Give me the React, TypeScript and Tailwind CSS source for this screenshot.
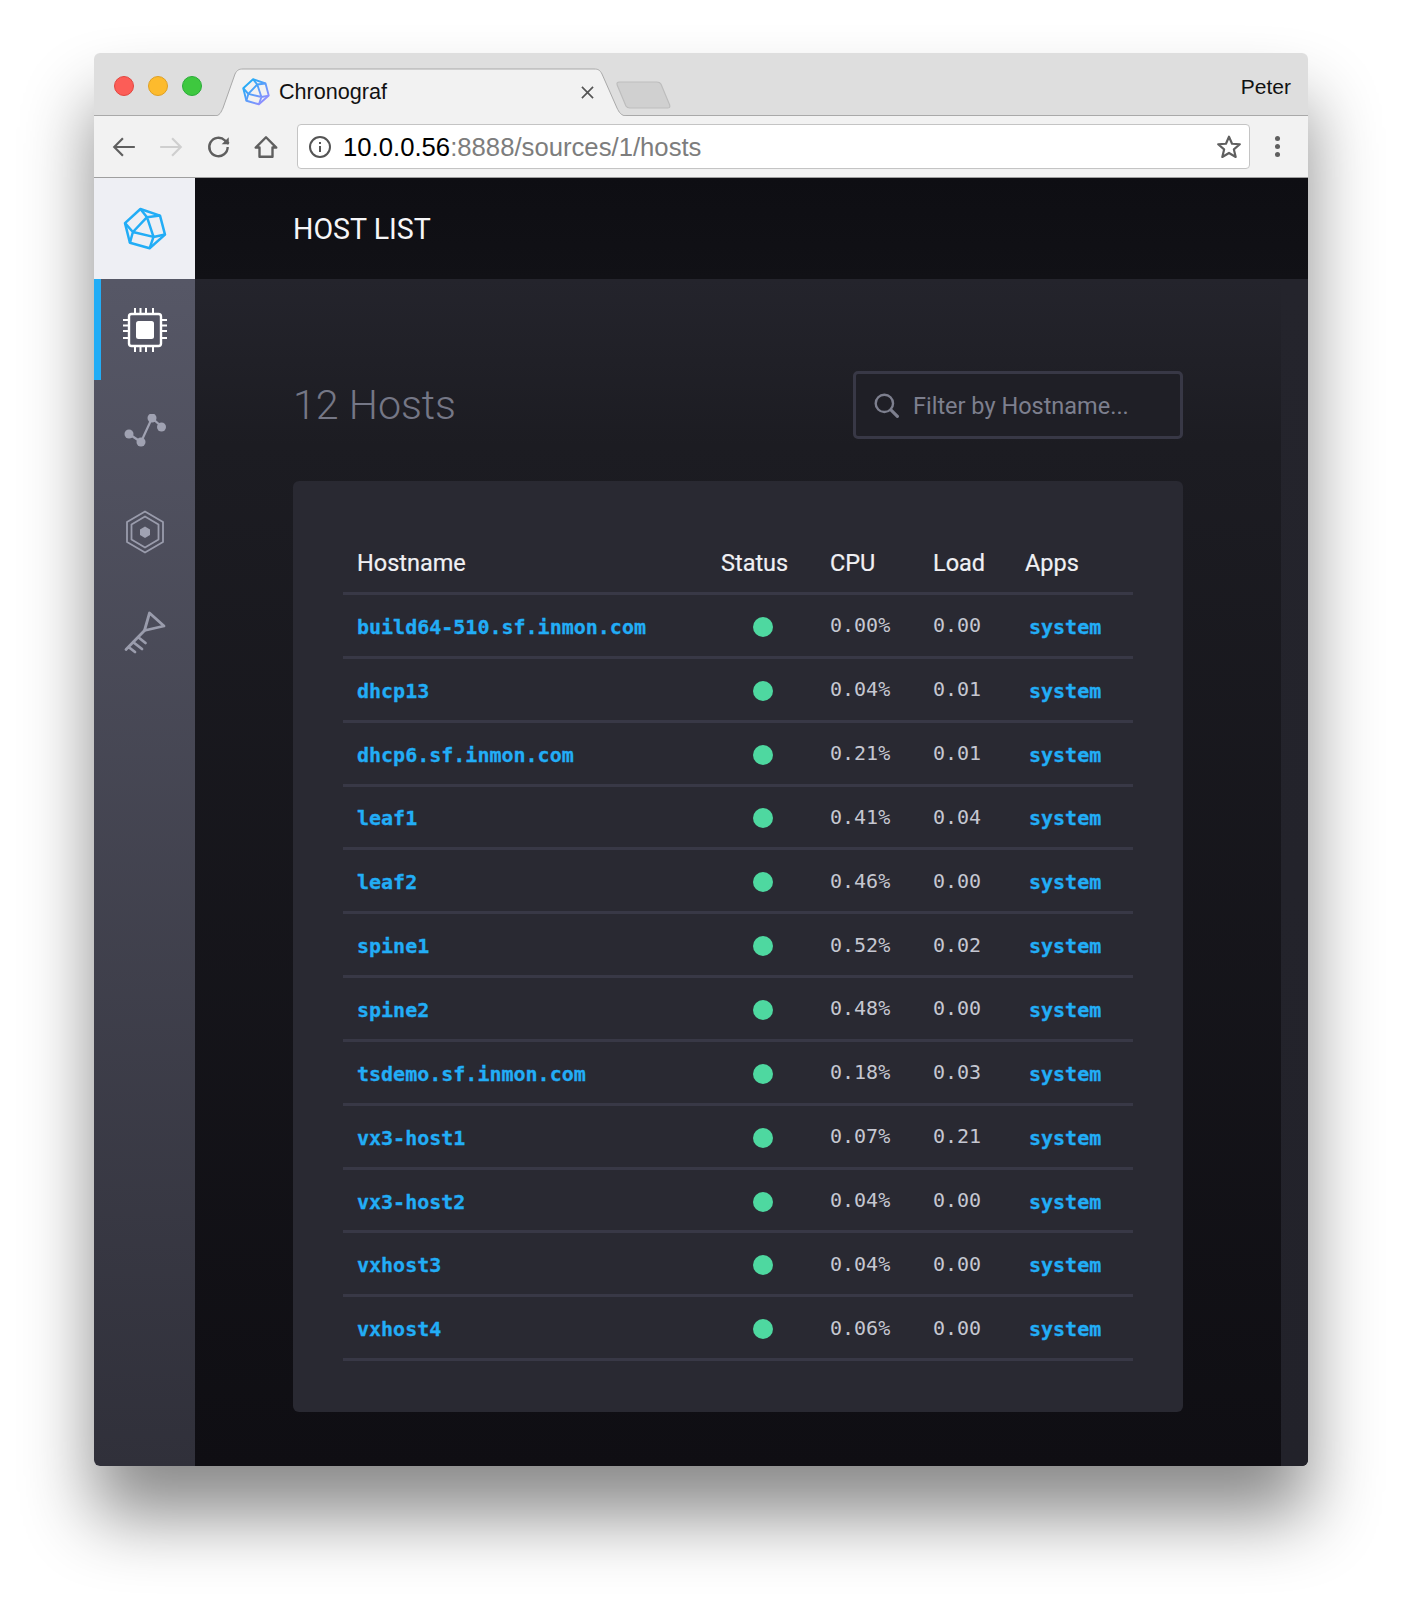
const hosts = [
  { name: 'build64-510.sf.inmon.com', cpu: '0.00%', load: '0.00' },
  { name: 'dhcp13', cpu: '0.04%', load: '0.01' },
  { name: 'dhcp6.sf.inmon.com', cpu: '0.21%', load: '0.01' },
  { name: 'leaf1', cpu: '0.41%', load: '0.04' },
  { name: 'leaf2', cpu: '0.46%', load: '0.00' },
  { name: 'spine1', cpu: '0.52%', load: '0.02' },
  { name: 'spine2', cpu: '0.48%', load: '0.00' },
  { name: 'tsdemo.sf.inmon.com', cpu: '0.18%', load: '0.03' },
  { name: 'vx3-host1', cpu: '0.07%', load: '0.21' },
  { name: 'vx3-host2', cpu: '0.04%', load: '0.00' },
  { name: 'vxhost3', cpu: '0.04%', load: '0.00' },
  { name: 'vxhost4', cpu: '0.06%', load: '0.00' },
];

const rowCols = 'grid grid-cols-[364px_109px_103px_92px_122px]';

function Logo({ className, gradient }: { className: string; gradient?: boolean }) {
  return (
    <svg viewBox="-2 -2 44 44" className={className} fill="none" stroke={gradient ? 'url(#tabLogo)' : '#22adf6'} strokeWidth={gradient ? 3 : 2.5} strokeLinejoin="round">
      {gradient && (
        <defs>
          <linearGradient id="tabLogo" gradientUnits="userSpaceOnUse" x1="5" y1="5" x2="35" y2="38">
            <stop offset="0" stopColor="#22adf6" />
            <stop offset="1" stopColor="#9a8cff" />
          </linearGradient>
        </defs>
      )}
      <path d="M15.400 0 35 6.600 40 25.600 24.600 39.300 4.900 33.800 0 14.100Z" />
      <path d="M15.400 0 22 8.200 35 6.600M22 8.200 7.900 23 0 14.100M7.900 23 4.900 33.800M7.900 23 28.500 27.900 40 25.600M28.500 27.900 24.600 39.300M22 8.200 28.500 27.900" />
    </svg>
  );
}

function CpuIcon() {
  return (
    <svg viewBox="0 0 44 44" className="h-[44px] w-[44px]" fill="none" stroke="#fff" strokeWidth="2">
      <rect x="6" y="6" width="32" height="32" rx="2.500" strokeWidth="2.400" />
      <rect x="13" y="13" width="18" height="18" rx="2.500" fill="#fff" stroke="none" />
      <path d="M12 0v5M17.500 0v5M23 0v5M30 0v5M12 39v5M17.500 39v5M23 39v5M30 39v5M0 12h5M0 17.500h5M0 23h5M0 30h5M39 12h5M39 17.500h5M39 23h5M39 30h5" />
    </svg>
  );
}

function GraphIcon() {
  return (
    <svg viewBox="0 0 42 38" className="mt-[4px] h-[38px] w-[42px]" fill="#a0a2b2" stroke="#a0a2b2" strokeWidth="2.200">
      <path d="M5 20 17 28 28 4 38 13" fill="none" />
      <circle cx="5" cy="20" r="4.500" stroke="none" />
      <circle cx="17" cy="28" r="4.500" stroke="none" />
      <circle cx="28" cy="4" r="4.500" stroke="none" />
      <circle cx="37.500" cy="13" r="4.500" stroke="none" />
    </svg>
  );
}

function HexIcon() {
  return (
    <svg viewBox="0 0 40 44" className="h-[44px] w-[40px]" fill="none" stroke="#9a9cac" strokeWidth="1.800" strokeLinejoin="round">
      <path d="M20 1.500 38 12v20L20 42.500 2 32V12Z" />
      <path d="M20 6.500 33.500 14.500v15L20 37.500 6.500 29.500v-15Z" />
      <path d="M20 16.500 25 19.500v5.500L20 28l-5-3v-5.500Z" fill="#a0a2b2" stroke="none" />
    </svg>
  );
}

function KeyIcon() {
  return (
    <svg viewBox="0 0 42 44" className="h-[44px] w-[42px]" fill="none" stroke="#9a9cac" strokeWidth="2.800" strokeLinecap="round" strokeLinejoin="round">
      <path d="M25.500 2 40 15 20.500 19.500Z" />
      <path d="M20.500 19.500 2 38.500M9 31 18 38M4.500 36 11 41M14 26 21.500 32" />
    </svg>
  );
}

export default function App() {
  return (
    <div className="h-[1600px] w-[1402px] overflow-hidden bg-white pl-[94px] pt-[53px]">
      <div className="h-[1413px] w-[1214px] overflow-hidden rounded-[6px] shadow-[0_50px_70px_rgba(0,0,0,0.46)]">
        {/* browser chrome */}
        <div className="relative flex h-[63px] items-center justify-end border-b border-[#a9a9a9] bg-[#dedede] pr-[17px] pt-[6px] font-['Liberation_Sans',sans-serif] text-[#111]">
          <span className="text-[21px]">Peter</span>
          <div className="absolute left-[20px] top-[23px] h-[20px] w-[20px] rounded-full border border-[#e2463f] bg-[#fc5d57]" />
          <div className="absolute left-[54px] top-[23px] h-[20px] w-[20px] rounded-full border border-[#dfa023] bg-[#fdbb2d]" />
          <div className="absolute left-[88px] top-[23px] h-[20px] w-[20px] rounded-full border border-[#2aac39] bg-[#3ec83f]" />
          <svg viewBox="0 0 420 48" className="absolute left-[120px] top-[15px] h-[48px] w-[420px]">
            <path d="M0 48 C6 48 7 44 9 40 L21 6 C23 2 25 1 29 1 H380 C384 1 386 2 388 6 L403 40 C405 44 407 48 413 48" fill="#f2f2f2" stroke="#a9a9a9" />
          </svg>
          <svg viewBox="0 0 48 28" preserveAspectRatio="none" className="absolute left-[522px] top-[28px] h-[28px] w-[56px]">
            <path d="M3 1 H35 C37 1 38 2 38.500 3 L46 24 C46.500 26 46 27 44 27 H12 C10 27 9 26 8.500 25 L1 4 C0.500 2 1 1 3 1Z" fill="#d0d0d0" stroke="#bdbdbd" />
          </svg>
          <div className="absolute left-[148px] top-[25px]"><Logo gradient className="h-[28px] w-[28px]" /></div>
          <span className="absolute left-[185px] top-[26px] text-[21.600px] leading-[26px] text-[#111]">Chronograf</span>
          <svg viewBox="0 0 14 14" className="absolute left-[487px] top-[33px] h-[13px] w-[13px]" stroke="#555" strokeWidth="1.800">
            <path d="M1 1 13 13M13 1 1 13" />
          </svg>
        </div>
        <div className="flex h-[62px] items-center border-b border-[#9f9f9f] bg-[#f2f2f2] font-['Liberation_Sans',sans-serif]">
          <svg viewBox="0 0 24 24" className="ml-[17px] h-[26px] w-[26px]" fill="none" stroke="#5f5f5f" strokeWidth="2"><path d="M22 12H3M11 4l-8 8 8 8" /></svg>
          <svg viewBox="0 0 24 24" className="ml-[21px] h-[26px] w-[26px]" fill="none" stroke="#cfcfcf" strokeWidth="2"><path d="M2 12h19M13 4l8 8-8 8" /></svg>
          <svg viewBox="0 0 24 24" className="ml-[22px] h-[26px] w-[26px]" fill="none" stroke="#5f5f5f" strokeWidth="2.200"><path d="M20 12a8.500 8.500 0 1 1-2.500-6L21 9" /><path d="M21 3v6.500h-6.500" fill="#5f5f5f" stroke="none" /></svg>
          <svg viewBox="0 0 24 24" className="ml-[21px] h-[26px] w-[26px]" fill="none" stroke="#5f5f5f" strokeWidth="2.200"><path d="M12 3 2.500 12.500H6V21h12v-8.500h3.500Z" strokeLinejoin="round" /></svg>
          <div className="ml-[18px] flex h-[45px] w-[953px] items-center rounded-[4px] border border-[#c4c4c4] bg-white">
            <svg viewBox="0 0 24 24" className="ml-[10px] h-[24px] w-[24px]" fill="none" stroke="#555" strokeWidth="2"><circle cx="12" cy="12" r="10" /><path d="M12 11v6M12 7v2" /></svg>
            <span className="ml-[11px] pt-[2px] text-[25.700px] text-black">10.0.0.56<span className="text-[#7d7d7d]">:8888/sources/1/hosts</span></span>
            <svg viewBox="0 0 24 24" className="ml-auto mr-[7px] h-[26px] w-[26px]" fill="none" stroke="#5f5f5f" strokeWidth="2" strokeLinejoin="round"><path d="M12 2.500 14.800 9 22 9.500 16.500 14.200 18.200 21.200 12 17.500 5.800 21.200 7.500 14.200 2 9.500 9.200 9Z" /></svg>
          </div>
          <div className="ml-[25px] flex flex-col gap-[3px]">
            <div className="h-[5px] w-[5px] rounded-full bg-[#5f5f5f]" />
            <div className="h-[5px] w-[5px] rounded-full bg-[#5f5f5f]" />
            <div className="h-[5px] w-[5px] rounded-full bg-[#5f5f5f]" />
          </div>
        </div>
        {/* app */}
        <div className="flex h-[1288px] font-['Roboto',sans-serif]">
          <div className="flex w-[101px] flex-col bg-gradient-to-b from-[#565766] from-[8%] to-[#30303a]">
            <div className="flex h-[101px] items-center justify-center bg-[#eeeff4]"><Logo className="h-[44px] w-[44px]" /></div>
            <div className="flex h-[101px] items-center justify-center border-l-[7px] border-[#22adf6] pr-[7px]">
              <CpuIcon />
            </div>
            <div className="flex h-[101px] items-center justify-center"><GraphIcon /></div>
            <div className="flex h-[101px] items-center justify-center"><HexIcon /></div>
            <div className="flex h-[101px] items-center justify-center"><KeyIcon /></div>
          </div>
          <div className="flex min-w-0 flex-1 flex-col">
            <div className="flex h-[101px] items-center bg-gradient-to-b from-[#0e0e13] to-[#111116] pl-[98px] pt-[2px] text-[28.600px] text-[#f6f6f8]">HOST LIST</div>
            <div className="flex min-h-0 flex-1 bg-gradient-to-b from-[#24242c] via-[#1c1c22] via-[14%] to-[#0f0e13]">
              <div className="w-[1086px] pl-[98px]">
                <div className="flex h-[202px] w-[890px] items-center justify-between pt-[50px]">
                  <h1 className="pt-[2px] text-[41.200px] font-light text-[#757786]">12 Hosts</h1>
                  <div className="flex h-[68px] w-[330px] items-center rounded-[5px] border-[3px] border-[#383846] bg-[#1f1f26]">
                    <svg viewBox="0 0 24 24" className="ml-[17px] h-[26px] w-[26px]" fill="none" stroke="#7d7f8e" strokeWidth="2.200"><circle cx="10.500" cy="10.500" r="8" /><path d="m16.500 16.500 6 6" strokeWidth="3" strokeLinecap="round" /></svg>
                    <span className="ml-[14px] pt-[3px] text-[23.500px] text-[#7d7f8e]">Filter by Hostname...</span>
                  </div>
                </div>
                <div className="h-[931px] w-[890px] rounded-[6px] bg-[#292932] pl-[50px] pt-[50px]">
                  <div className="w-[790px]">
                    <div className={`${rowCols} h-[64px] items-center border-b-[3px] border-[#383846] pt-[5px] text-[23.500px] text-[#f0f0f4] [-webkit-text-stroke:0.2px_#f0f0f4]`}>
                      <div className="pl-[14px]">Hostname</div>
                      <div className="pl-[14px]">Status</div>
                      <div className="pl-[14px]">CPU</div>
                      <div className="pl-[14px]">Load</div>
                      <div className="pl-[14px]">Apps</div>
                    </div>
                    {hosts.map((host) => (
                      <div key={host.name} className={`${rowCols} h-[63.850px] items-center border-b-[3px] border-[#383846] pt-[3px] font-['DejaVu_Sans_Mono',monospace] text-[20px]`}>
                        <div className="pl-[14px] font-bold text-[#22adf6] [-webkit-text-stroke:0.3px_#22adf6]">{host.name}</div>
                        <div className="pl-[46px]"><div className="h-[20px] w-[20px] rounded-full bg-[#4ed8a0]" /></div>
                        <div className="pl-[14px] pb-[3px] text-[#c5c7d1]">{host.cpu}</div>
                        <div className="pl-[14px] pb-[3px] text-[#c5c7d1]">{host.load}</div>
                        <div className="pl-[18px] font-bold text-[#22adf6] [-webkit-text-stroke:0.3px_#22adf6]">system</div>
                      </div>
                    ))}
                  </div>
                </div>
              </div>
              <div className="w-[27px] bg-gradient-to-b from-[#24242c] to-[#22222a]" />
            </div>
          </div>
        </div>
      </div>
    </div>
  );
}
